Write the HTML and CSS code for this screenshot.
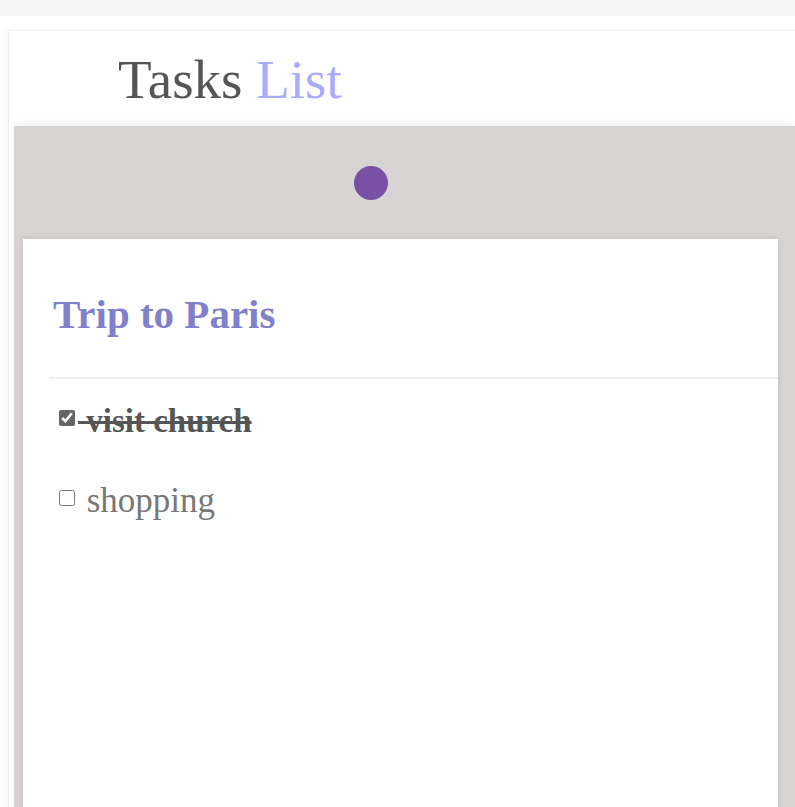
FILE: index.html
```html
<!DOCTYPE html>
<html>
<head>
<meta charset="utf-8">
<link rel="stylesheet" href="styles.css">
</head>
<body>
<div class="topbar"></div>
<div class="app">
  <header class="header">
    <h1 class="title"><span class="title-main">Tasks</span> <span class="title-accent">List</span></h1>
  </header>
  <div class="board">
    <div class="toolbar"><span class="dot"></span></div>
    <section class="card">
      <h2 class="card-title">Trip to Paris</h2>
      <ul class="tasks">
        <li class="task done"><input type="checkbox" checked> visit church</li>
        <li class="task"><input type="checkbox"> shopping</li>
      </ul>
    </section>
  </div>
</div>
</body>
</html>
```
FILE: styles.css
```css
html, body { margin: 0; padding: 0; background: #fff; }
body { font-family: "Liberation Serif", "Times New Roman", serif; overflow: hidden; height: 807px; }
.topbar { height: 16px; background: #f6f5f5; }
.app {
  margin: 14px 0 0 8px;
  padding: 10px 0 0 5px;
  border-top: 1px solid #f3f3f3;
  border-left: 1px solid #eeeeee;
  box-shadow: -2px 0 6px rgba(0,0,0,0.04);
  height: 800px;
}
.header { height: 85px; padding-left: 104px; box-sizing: border-box; }
.title { margin: 0; font-weight: normal; font-size: 55px; line-height: 78px; }
.title-main { color: #555; }
.title-accent { color: #aaaaff; }
.board { background: #d8d4d3; padding: 0 17px 0 9px; height: 700px; box-shadow: 0 -3px 6px rgba(0,0,0,0.06); }
.toolbar { height: 113px; display: flex; align-items: center; padding-left: 331px; }
.dot { width: 34px; height: 34px; border-radius: 50%; background: #7a4fa6; display: block; }
.card { background: #fff; height: 600px; padding: 0 0 0 26px; box-shadow: 0 0 6px rgba(0,0,0,0.12); }
.card-title { margin: 0; padding: 52px 0 0 4px; height: 140px; box-sizing: border-box; font-size: 41px; color: #8080cc; font-weight: bold; line-height: 46px; border-bottom: 2px solid #eeeeee; }
.tasks { list-style: none; margin: 0; padding: 22px 0 0 10px; }
.task { font-size: 35px; line-height: 40px; color: #777; height: 80px; }
.task input { width: 16px; height: 16px; margin: 0 3px 0 0; vertical-align: 6px; accent-color: #666; }
.task.done { color: #555; font-weight: bold; font-size: 33px; text-decoration: line-through; }
```
